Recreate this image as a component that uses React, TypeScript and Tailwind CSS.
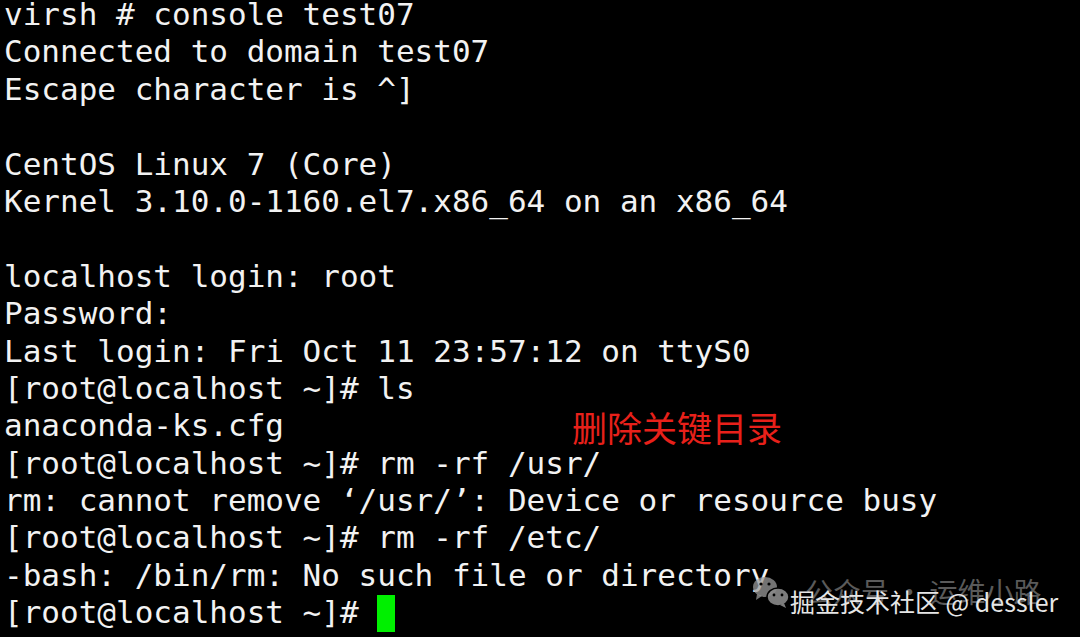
const lines = [
  'virsh # console test07',
  'Connected to domain test07',
  'Escape character is ^]',
  '',
  'CentOS Linux 7 (Core)',
  'Kernel 3.10.0-1160.el7.x86_64 on an x86_64',
  '',
  'localhost login: root',
  'Password:',
  'Last login: Fri Oct 11 23:57:12 on ttyS0',
  '[root@localhost ~]# ls',
  'anaconda-ks.cfg',
  '[root@localhost ~]# rm -rf /usr/',
  'rm: cannot remove \u2018/usr/\u2019: Device or resource busy',
  '[root@localhost ~]# rm -rf /etc/',
  '-bash: /bin/rm: No such file or directory',
]

function WeChatIcon() {
  return (
    <svg width="40" height="36" viewBox="0 0 40 36" className="shrink-0">
      <ellipse cx="13" cy="12" rx="12" ry="10" fill="#9a9a9a" fillOpacity="0.75" />
      <path d="M5 19 L4 25 L10 21 Z" fill="#9a9a9a" fillOpacity="0.75" />
      <ellipse cx="26" cy="22" rx="11" ry="9" fill="#8a8a8a" fillOpacity="0.9" stroke="#000" strokeWidth="1.5" />
      <path d="M32 28 L34 33 L28 30 Z" fill="#8a8a8a" fillOpacity="0.9" />
      <circle cx="9" cy="9" r="1.6" fill="#000" />
      <circle cx="17" cy="9" r="1.6" fill="#000" />
      <circle cx="22" cy="20" r="1.4" fill="#000" />
      <circle cx="30" cy="20" r="1.4" fill="#000" />
    </svg>
  )
}

export default function App() {
  return (
    <div className="relative w-[1080px] h-[637px] overflow-hidden bg-black">
      {/* terminal output */}
      <div
        className="pl-[4px] text-[31px] leading-[28px] text-[#f2f2f2] whitespace-pre"
        style={{ fontFamily: '"DejaVu Sans Mono", monospace' }}
      >
        {lines.map((l, i) => (
          <div key={i} className="h-[37.4px]">{l}</div>
        ))}
        <div className="h-[37.4px] flex items-start">
          <span>[root@localhost ~]# </span>
          <span className="inline-block w-[18px] h-[37px] -translate-y-[3px] bg-[#00f000]" />
        </div>
      </div>

      {/* red annotation */}
      <div
        className="absolute left-[572px] top-[407px] text-[35px] leading-[40px] text-[#e8201a]"
        style={{ fontFamily: '"Noto Sans CJK SC", sans-serif' }}
      >
        删除关键目录
      </div>

      {/* watermark */}
      <div className="absolute left-[752px] top-[575px]">
        <WeChatIcon />
      </div>
      <div
        className="absolute left-[805px] top-[574px] text-[28px] leading-[34px] text-[#5a5a5a] whitespace-pre"
        style={{ fontFamily: '"Noto Sans CJK SC", sans-serif' }}
      >
        公众号 · 运维小路
      </div>
      <div
        className="absolute left-[790px] top-[586px] text-[25px] leading-[30px] text-[#e6e6e6] whitespace-pre"
        style={{ fontFamily: '"Noto Sans CJK SC", sans-serif' }}
      >
        掘金技术社区 @ dessler
      </div>
    </div>
  )
}
